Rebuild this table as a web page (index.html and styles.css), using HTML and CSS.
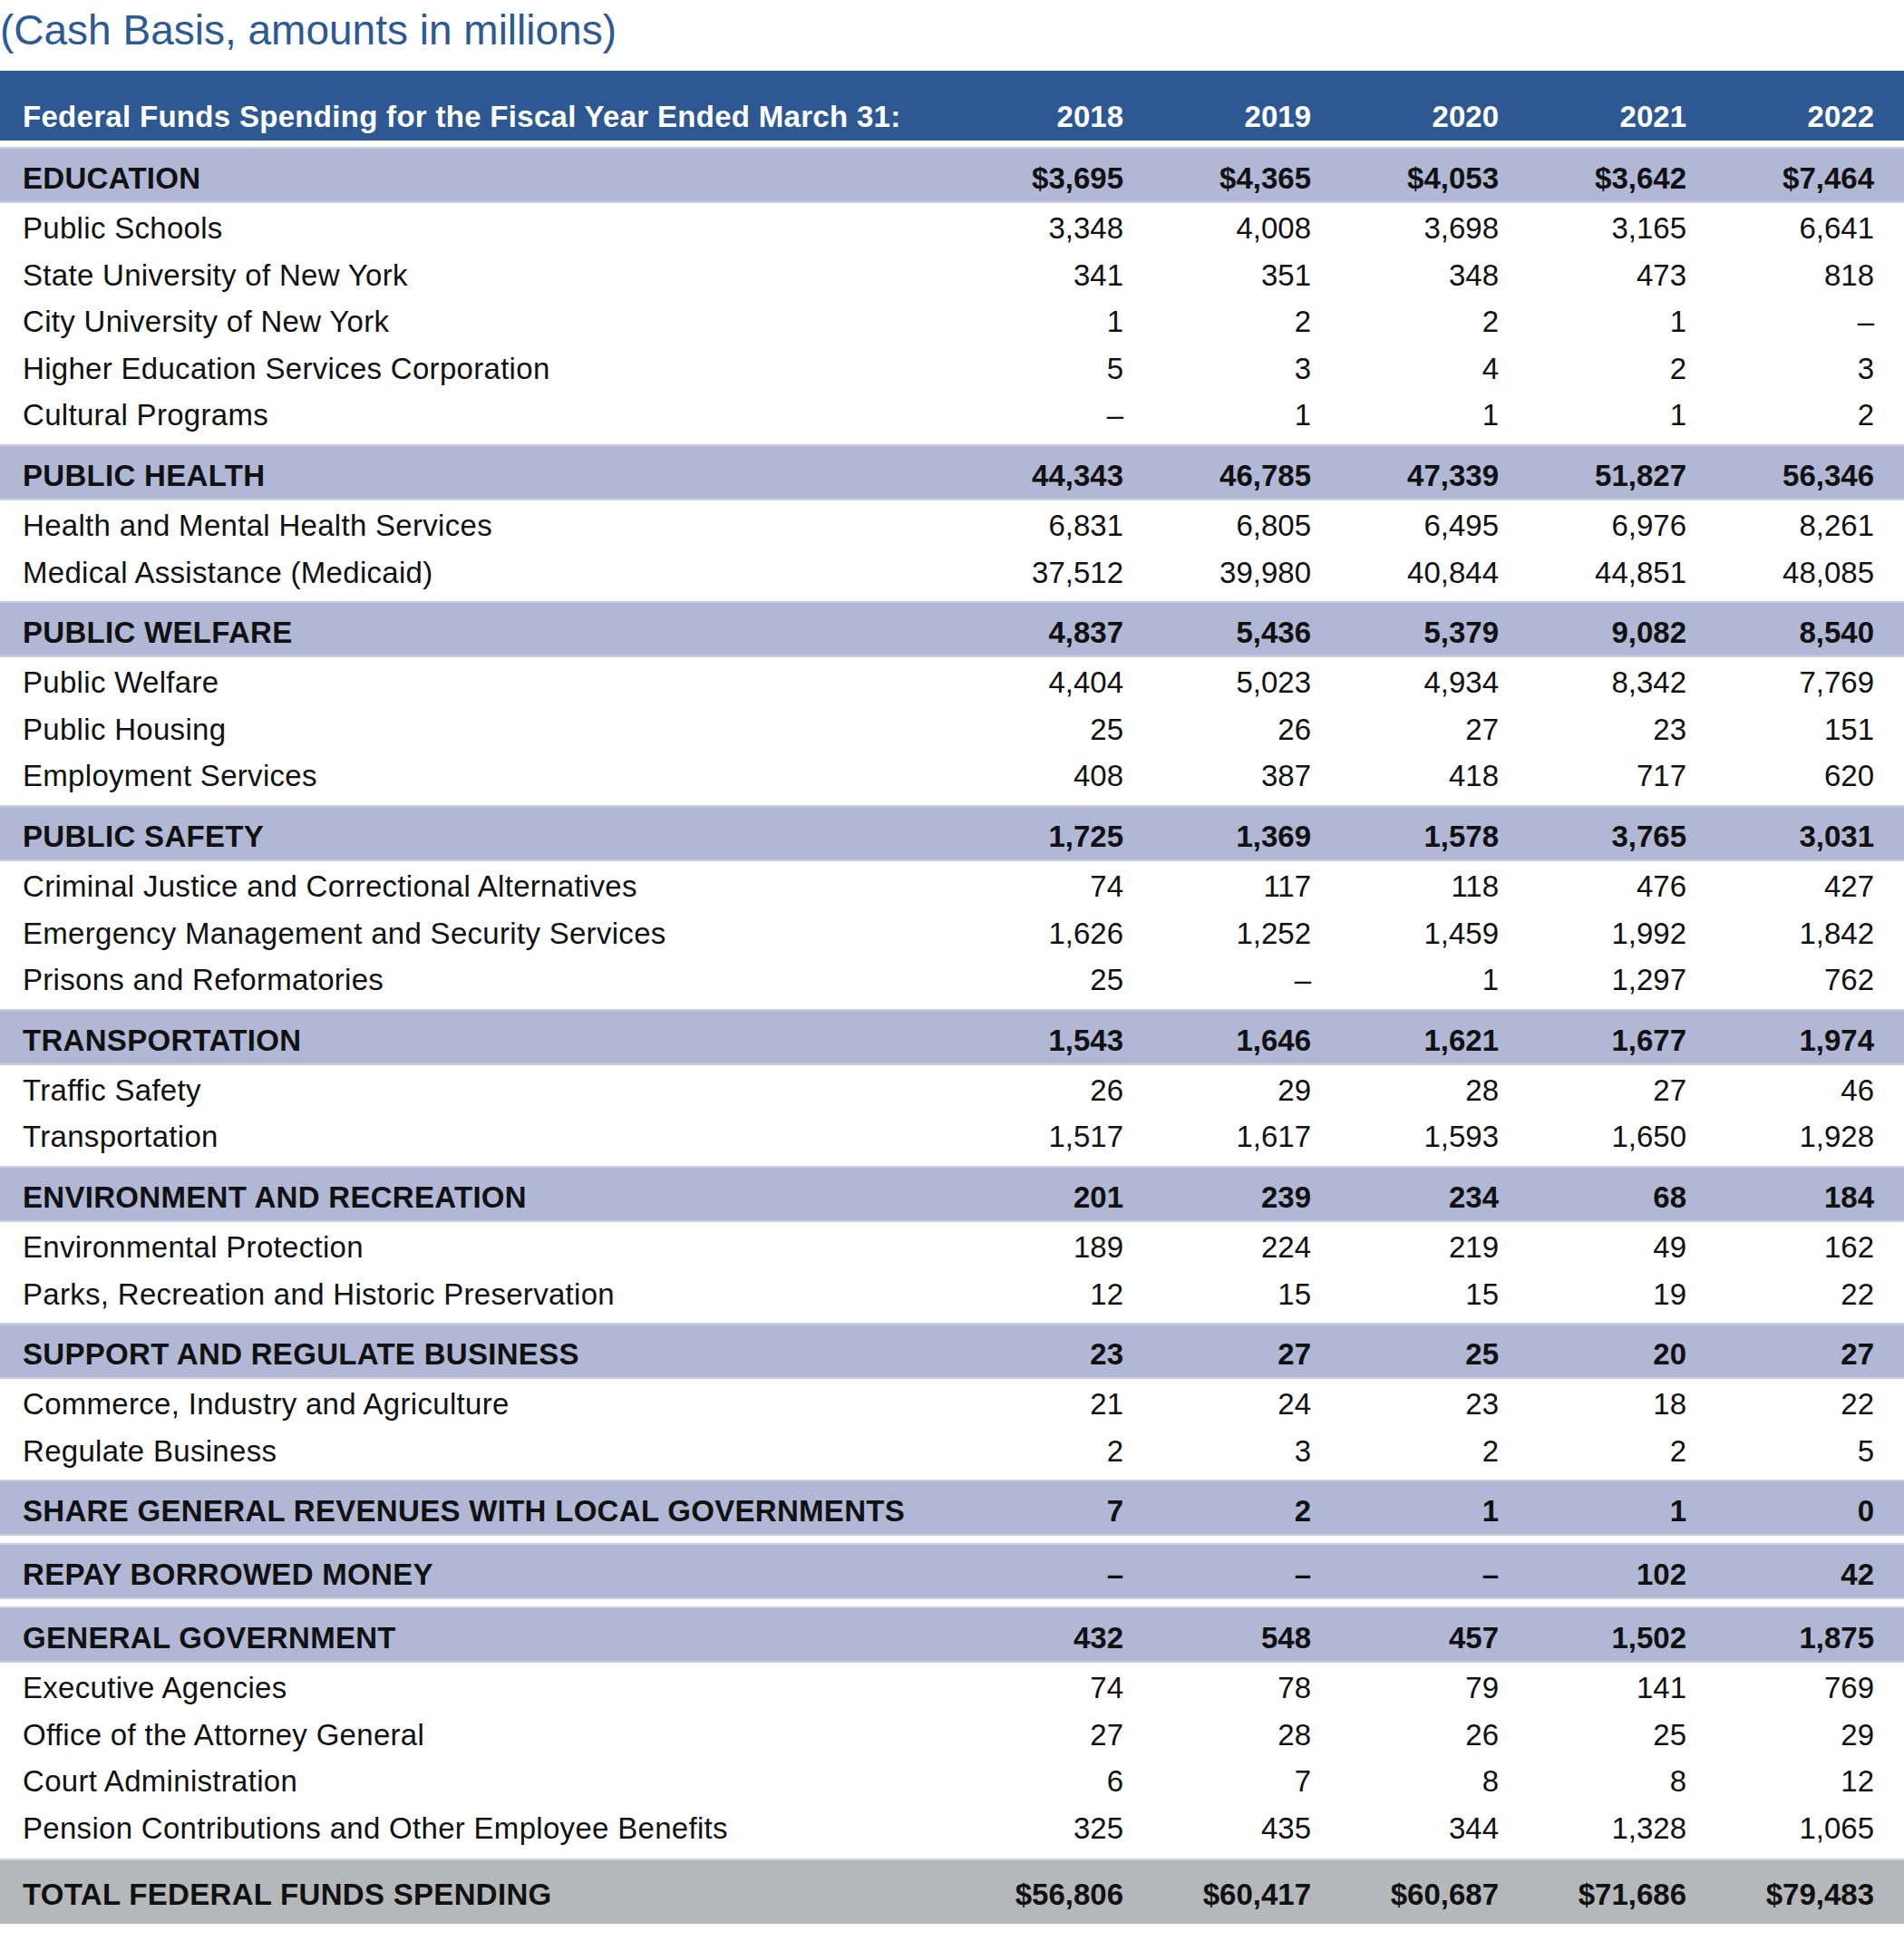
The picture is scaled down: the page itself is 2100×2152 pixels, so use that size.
FILE: index.html
```html
<!DOCTYPE html>
<html lang="en">
<head>
<meta charset="utf-8">
<title>Federal Funds Spending</title>
<link rel="stylesheet" href="styles.css">
</head>
<body>
<div class="title">(Cash Basis, amounts in millions)</div>
<div class="fin">
  <div class="row head"><span>Federal Funds Spending for the Fiscal Year Ended March 31:</span><span>2018</span><span>2019</span><span>2020</span><span>2021</span><span>2022</span></div>

  <div class="row cat first"><span>EDUCATION</span><span>$3,695</span><span>$4,365</span><span>$4,053</span><span>$3,642</span><span>$7,464</span></div>
  <div class="row item"><span>Public Schools</span><span>3,348</span><span>4,008</span><span>3,698</span><span>3,165</span><span>6,641</span></div>
  <div class="row item"><span>State University of New York</span><span>341</span><span>351</span><span>348</span><span>473</span><span>818</span></div>
  <div class="row item"><span>City University of New York</span><span>1</span><span>2</span><span>2</span><span>1</span><span>–</span></div>
  <div class="row item"><span>Higher Education Services Corporation</span><span>5</span><span>3</span><span>4</span><span>2</span><span>3</span></div>
  <div class="row item"><span>Cultural Programs</span><span>–</span><span>1</span><span>1</span><span>1</span><span>2</span></div>

  <div class="row cat"><span>PUBLIC HEALTH</span><span>44,343</span><span>46,785</span><span>47,339</span><span>51,827</span><span>56,346</span></div>
  <div class="row item"><span>Health and Mental Health Services</span><span>6,831</span><span>6,805</span><span>6,495</span><span>6,976</span><span>8,261</span></div>
  <div class="row item"><span>Medical Assistance (Medicaid)</span><span>37,512</span><span>39,980</span><span>40,844</span><span>44,851</span><span>48,085</span></div>

  <div class="row cat"><span>PUBLIC WELFARE</span><span>4,837</span><span>5,436</span><span>5,379</span><span>9,082</span><span>8,540</span></div>
  <div class="row item"><span>Public Welfare</span><span>4,404</span><span>5,023</span><span>4,934</span><span>8,342</span><span>7,769</span></div>
  <div class="row item"><span>Public Housing</span><span>25</span><span>26</span><span>27</span><span>23</span><span>151</span></div>
  <div class="row item"><span>Employment Services</span><span>408</span><span>387</span><span>418</span><span>717</span><span>620</span></div>

  <div class="row cat"><span>PUBLIC SAFETY</span><span>1,725</span><span>1,369</span><span>1,578</span><span>3,765</span><span>3,031</span></div>
  <div class="row item"><span>Criminal Justice and Correctional Alternatives</span><span>74</span><span>117</span><span>118</span><span>476</span><span>427</span></div>
  <div class="row item"><span>Emergency Management and Security Services</span><span>1,626</span><span>1,252</span><span>1,459</span><span>1,992</span><span>1,842</span></div>
  <div class="row item"><span>Prisons and Reformatories</span><span>25</span><span>–</span><span>1</span><span>1,297</span><span>762</span></div>

  <div class="row cat"><span>TRANSPORTATION</span><span>1,543</span><span>1,646</span><span>1,621</span><span>1,677</span><span>1,974</span></div>
  <div class="row item"><span>Traffic Safety</span><span>26</span><span>29</span><span>28</span><span>27</span><span>46</span></div>
  <div class="row item"><span>Transportation</span><span>1,517</span><span>1,617</span><span>1,593</span><span>1,650</span><span>1,928</span></div>

  <div class="row cat"><span>ENVIRONMENT AND RECREATION</span><span>201</span><span>239</span><span>234</span><span>68</span><span>184</span></div>
  <div class="row item"><span>Environmental Protection</span><span>189</span><span>224</span><span>219</span><span>49</span><span>162</span></div>
  <div class="row item"><span>Parks, Recreation and Historic Preservation</span><span>12</span><span>15</span><span>15</span><span>19</span><span>22</span></div>

  <div class="row cat"><span>SUPPORT AND REGULATE BUSINESS</span><span>23</span><span>27</span><span>25</span><span>20</span><span>27</span></div>
  <div class="row item"><span>Commerce, Industry and Agriculture</span><span>21</span><span>24</span><span>23</span><span>18</span><span>22</span></div>
  <div class="row item"><span>Regulate Business</span><span>2</span><span>3</span><span>2</span><span>2</span><span>5</span></div>

  <div class="row cat"><span>SHARE GENERAL REVENUES WITH LOCAL GOVERNMENTS</span><span>7</span><span>2</span><span>1</span><span>1</span><span>0</span></div>

  <div class="row cat"><span>REPAY BORROWED MONEY</span><span>–</span><span>–</span><span>–</span><span>102</span><span>42</span></div>

  <div class="row cat"><span>GENERAL GOVERNMENT</span><span>432</span><span>548</span><span>457</span><span>1,502</span><span>1,875</span></div>
  <div class="row item"><span>Executive Agencies</span><span>74</span><span>78</span><span>79</span><span>141</span><span>769</span></div>
  <div class="row item"><span>Office of the Attorney General</span><span>27</span><span>28</span><span>26</span><span>25</span><span>29</span></div>
  <div class="row item"><span>Court Administration</span><span>6</span><span>7</span><span>8</span><span>8</span><span>12</span></div>
  <div class="row item"><span>Pension Contributions and Other Employee Benefits</span><span>325</span><span>435</span><span>344</span><span>1,328</span><span>1,065</span></div>

  <div class="row total"><span>TOTAL FEDERAL FUNDS SPENDING</span><span>$56,806</span><span>$60,417</span><span>$60,687</span><span>$71,686</span><span>$79,483</span></div>
</div>
</body>
</html>
```

FILE: styles.css
```css
html, body {
  margin: 0;
  padding: 0;
  background: #ffffff;
}

body {
  font-family: "Liberation Sans", Arial, Helvetica, sans-serif;
  color: #111111;
  width: 2100px;
}

.title {
  height: 78px;
  line-height: 66px;
  font-size: 46px;
  color: #2d5994;
  white-space: nowrap;
}

.fin {
  display: flex;
  flex-direction: column;
}

.row {
  display: grid;
  grid-template-columns: 1fr repeat(5, 207px);
  padding: 0 33px 0 25px;
  font-size: 33px;
  white-space: nowrap;
  box-sizing: border-box;
}

.row span:first-child {
  letter-spacing: 0.3px;
}

.row span + span {
  text-align: right;
}

.head {
  height: 77px;
  background: #2d5891;
  color: #ffffff;
  font-weight: bold;
  line-height: 40px;
  padding-top: 31px;
  padding-bottom: 6px;
}

.cat {
  height: 62px;
  margin-top: 8px;
  background: #b0b8d6;
  border-top: 2px solid #c9cfe3;
  border-bottom: 2px solid #c9cfe3;
  font-weight: bold;
  line-height: 50px;
  padding-top: 8px;
}

.cat.first {
  margin-top: 7px;
}

.item {
  height: 51.6px;
  line-height: 47.6px;
  padding-top: 4px;
}

.total {
  height: 72px;
  margin-top: 9px;
  background: #b5b8bb;
  border-top: 2px solid #d2d4d6;
  font-weight: bold;
  line-height: 64px;
  padding-top: 6px;
}
```
